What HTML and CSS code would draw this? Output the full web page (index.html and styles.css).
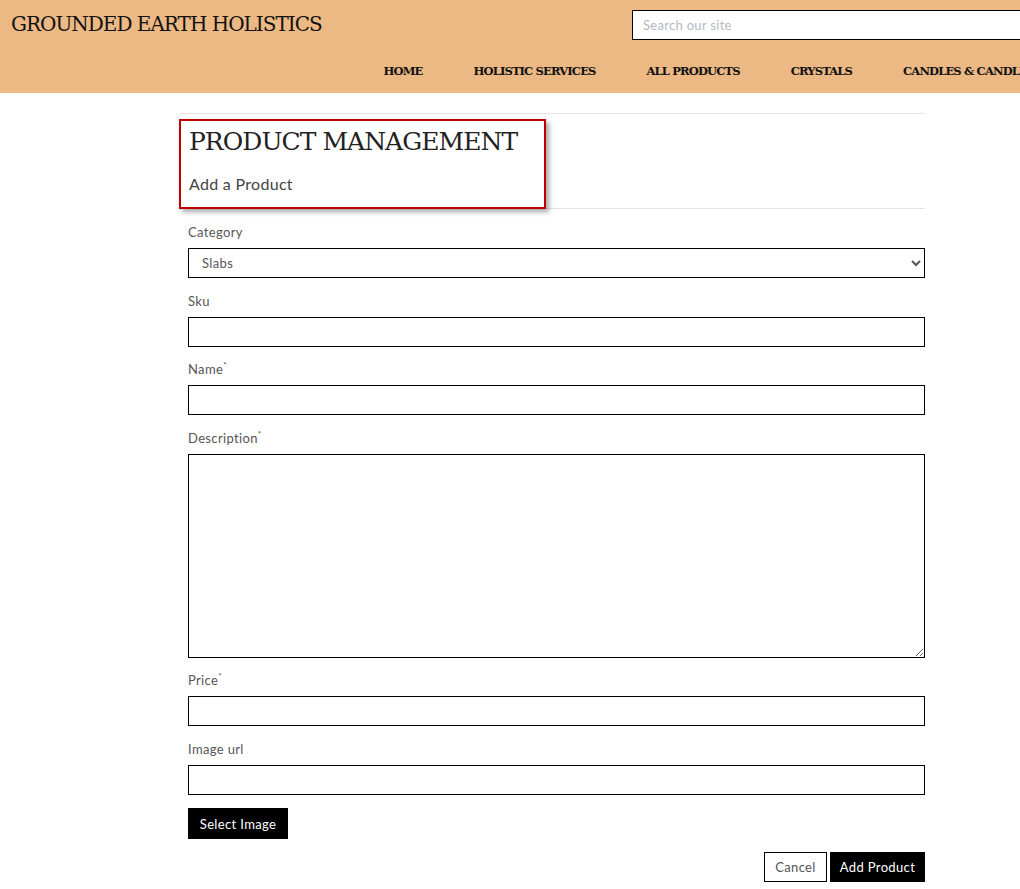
FILE: index.html
```html
<!DOCTYPE html>
<html lang="en">
<head>
<meta charset="utf-8">
<title>Product Management - Grounded Earth Holistics</title>
<link rel="stylesheet" href="styles.css">
</head>
<body>
<header class="site-header">
  <div class="header-top">
    <a class="logo" href="#">GROUNDED EARTH HOLISTICS</a>
    <input class="search" type="text" placeholder="Search our site">
  </div>
  <nav class="main-nav">
    <a href="#">HOME</a>
    <a href="#">HOLISTIC SERVICES</a>
    <a href="#">ALL PRODUCTS</a>
    <a href="#">CRYSTALS</a>
    <a href="#">CANDLES &amp; CANDLE HOLDERS</a>
  </nav>
</header>

<main class="container">
  <hr class="rule">
  <div class="page-title">
    <h1 class="title">PRODUCT MANAGEMENT</h1>
    <h2 class="subtitle">Add a Product</h2>
    <div class="annotation"></div>
  </div>
  <hr class="rule">

  <form class="product-form">
    <label class="field-label" for="category">Category</label>
    <select id="category" class="field">
      <option>Slabs</option>
    </select>

    <label class="field-label" for="sku">Sku</label>
    <input id="sku" class="field" type="text">

    <label class="field-label" for="name">Name<sup>*</sup></label>
    <input id="name" class="field" type="text">

    <label class="field-label" for="description">Description<sup>*</sup></label>
    <textarea id="description" class="field textarea"></textarea>

    <label class="field-label" for="price">Price<sup>*</sup></label>
    <input id="price" class="field" type="text">

    <label class="field-label" for="image_url">Image url</label>
    <input id="image_url" class="field" type="text">

    <div class="select-row">
      <button type="button" class="btn btn-black btn-select">Select Image</button>
    </div>

    <div class="actions">
      <a class="btn btn-outline" href="#">Cancel</a>
      <button type="submit" class="btn btn-black">Add Product</button>
    </div>
  </form>
</main>
</body>
</html>
```

FILE: styles.css
```css
html, body {
  margin: 0;
  padding: 0;
  background: #fff;
  overflow-x: hidden;
}

body {
  font-family: "Lato", "Open Sans", sans-serif;
  color: #555;
}

.site-header {
  background: #ecb884;
  height: 93px;
  overflow: hidden;
}

.header-top {
  display: flex;
  align-items: flex-start;
  width: calc(100% + 40px);
}

.logo {
  flex: 1;
  font-family: "DejaVu Serif", "Liberation Serif", serif;
  font-size: 20px;
  letter-spacing: -1px;
  color: #111;
  text-decoration: none;
  padding: 10px 0 0 11px;
  line-height: 28px;
}

.search {
  flex: 0 0 428px;
  box-sizing: border-box;
  height: 30px;
  margin-top: 10px;
  border: 1px solid #000;
  padding: 0 10px;
  font-family: "Lato", sans-serif;
  font-size: 13px;
  letter-spacing: 0.3px;
  outline: none;
}

.search::placeholder {
  color: #b3b9c4;
}

.main-nav {
  display: flex;
  white-space: nowrap;
  margin-top: 19px;
  padding-left: 358px;
}

.main-nav a {
  font-family: "DejaVu Serif", "Liberation Serif", serif;
  font-weight: bold;
  font-size: 11.5px;
  letter-spacing: -0.85px;
  color: #111;
  text-decoration: none;
  padding: 0 25.5px;
  line-height: 24px;
}

.container {
  margin-left: 180px;
  width: 745px;
}

.rule {
  border: 0;
  border-top: 1px solid #e4e4e4;
  margin: 0;
}

.container > .rule:first-child {
  margin-top: 20px;
}

.page-title {
  position: relative;
  padding: 11px 0 14px 9px;
}

.title {
  margin: 0;
  font-family: "DejaVu Serif", "Liberation Serif", serif;
  font-weight: normal;
  font-size: 25px;
  letter-spacing: -0.95px;
  color: #222;
  line-height: 34px;
}

.subtitle {
  margin: 15px 0 0;
  font-family: "Lato", sans-serif;
  font-weight: normal;
  font-size: 16px;
  letter-spacing: 0.3px;
  color: #444;
  line-height: 20px;
}

.annotation {
  position: absolute;
  left: -1px;
  top: 5px;
  width: 363px;
  height: 86px;
  border: 2px solid #c00000;
  box-shadow: 3px 3px 5px rgba(0, 0, 0, 0.35);
  pointer-events: none;
}

.product-form {
  display: flex;
  flex-direction: column;
  padding: 14px 0 0 8px;
}

.field-label {
  font-size: 13px;
  letter-spacing: 0.35px;
  line-height: 18px;
  color: #555;
  margin-bottom: 7px;
}

.field-label sup {
  font-size: 8px;
  vertical-align: top;
  line-height: 10px;
}

.field {
  box-sizing: border-box;
  width: 737px;
  height: 30px;
  border: 1px solid #000;
  border-radius: 0;
  margin: 0 0 13.5px;
  padding: 0 13px;
  font-family: "Lato", sans-serif;
  font-size: 13px;
  letter-spacing: 0.35px;
  color: #555;
  background: #fff;
  outline: none;
}

select.field {
  padding: 0 9px;
}

.textarea {
  height: 204px;
  padding: 6px 13px;
  resize: vertical;
}

.select-row {
  display: flex;
}

.btn {
  box-sizing: border-box;
  display: inline-flex;
  align-items: center;
  justify-content: center;
  height: 30px;
  font-family: "Lato", sans-serif;
  font-size: 13px;
  letter-spacing: 0.35px;
  white-space: nowrap;
  border: 1px solid #000;
  border-radius: 0;
  text-decoration: none;
  cursor: pointer;
}

.btn-black {
  background: #000;
  color: #fff;
  padding: 0 4px;
}

.btn-select {
  height: 31px;
  width: 100px;
}

.btn-outline {
  background: #fff;
  color: #555;
  padding: 0 4px;
}

.actions {
  display: flex;
  justify-content: flex-end;
  gap: 3px;
  margin-top: 13px;
  width: 737px;
}

.actions .btn-outline {
  width: 63px;
}

.actions .btn-black {
  width: 95px;
}
```
